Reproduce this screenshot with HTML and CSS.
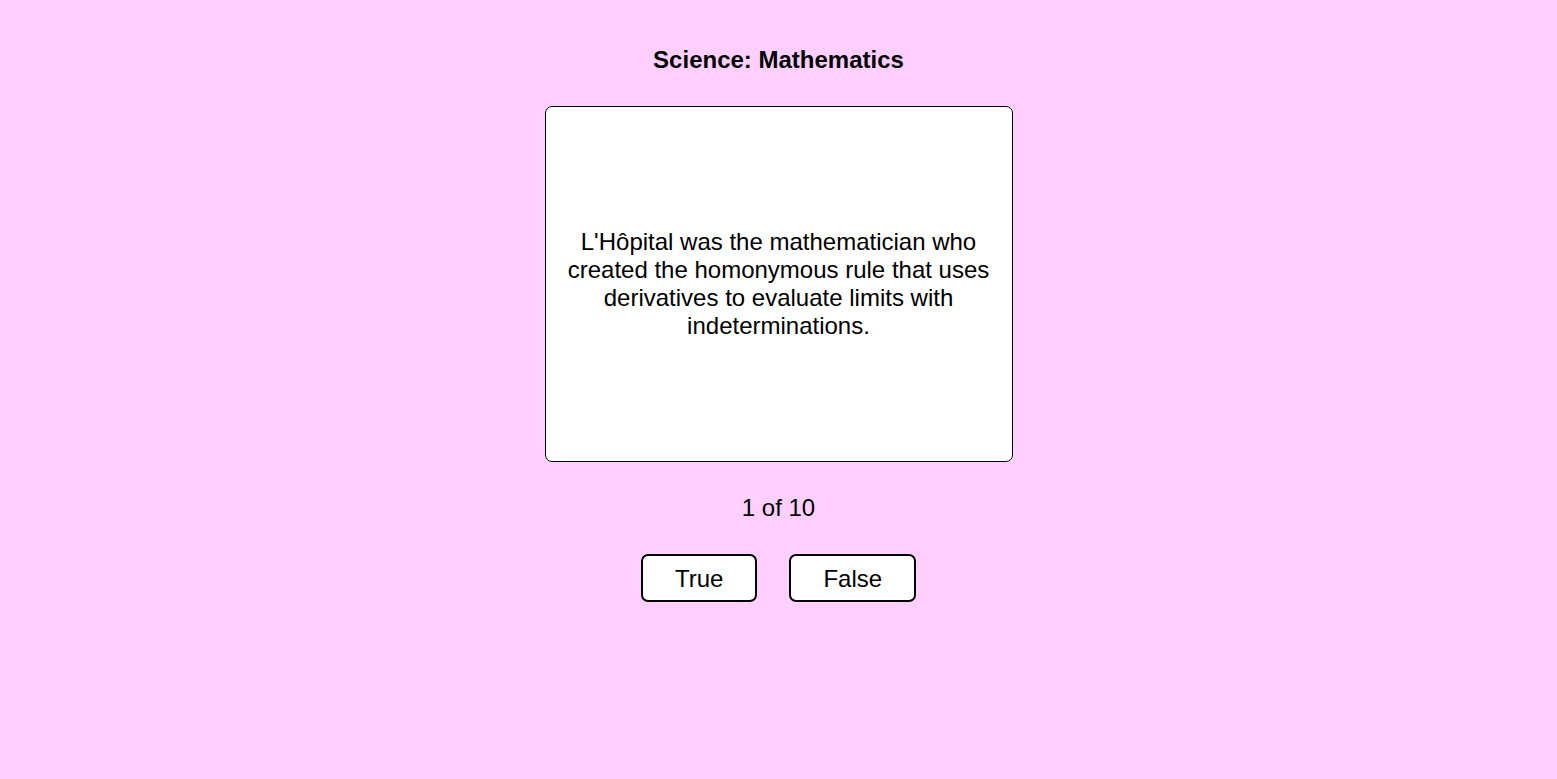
FILE: index.html
```html
<!DOCTYPE html>
<html lang="en">
<head>
<meta charset="utf-8">
<title>Quiz</title>
<link rel="stylesheet" href="styles.css">
</head>
<body>
<main class="quiz">
  <h1 class="category">Science: Mathematics</h1>
  <div class="card">
    <p class="question">L'Hôpital was the mathematician who created the homonymous rule that uses derivatives to evaluate limits with indeterminations.</p>
  </div>
  <div class="counter">1 of 10</div>
  <div class="answers">
    <button class="answer">True</button>
    <button class="answer">False</button>
  </div>
</main>
</body>
</html>
```
FILE: styles.css
```css
html, body {
  margin: 0;
  padding: 0;
  background: #ffd0ff;
  font-family: "Liberation Sans", Arial, sans-serif;
  color: #000;
}
.quiz {
  display: flex;
  flex-direction: column;
  align-items: center;
  padding-top: 46px;
  min-height: 779px;
  box-sizing: border-box;
}
.category {
  margin: 0;
  font-size: 24px;
  line-height: 27px;
  font-weight: bold;
}
.card {
  margin-top: 33px;
  width: 468px;
  height: 356px;
  box-sizing: border-box;
  background: #fff;
  border: 1px solid #000;
  border-radius: 7px;
  display: flex;
  align-items: center;
  justify-content: center;
  padding: 0 20px;
}
.question {
  margin: 0;
  font-size: 24px;
  line-height: 28px;
  text-align: center;
}
.counter {
  margin-top: 32px;
  font-size: 24px;
  line-height: 27px;
}
.answers {
  margin-top: 33px;
  display: flex;
  gap: 32px;
}
.answer {
  font-family: "Liberation Sans", Arial, sans-serif;
  font-size: 24px;
  line-height: 27px;
  height: 48px;
  padding: 0 32px;
  background: #fff;
  color: #000;
  border: 2px solid #000;
  border-radius: 7px;
  cursor: pointer;
}
```
